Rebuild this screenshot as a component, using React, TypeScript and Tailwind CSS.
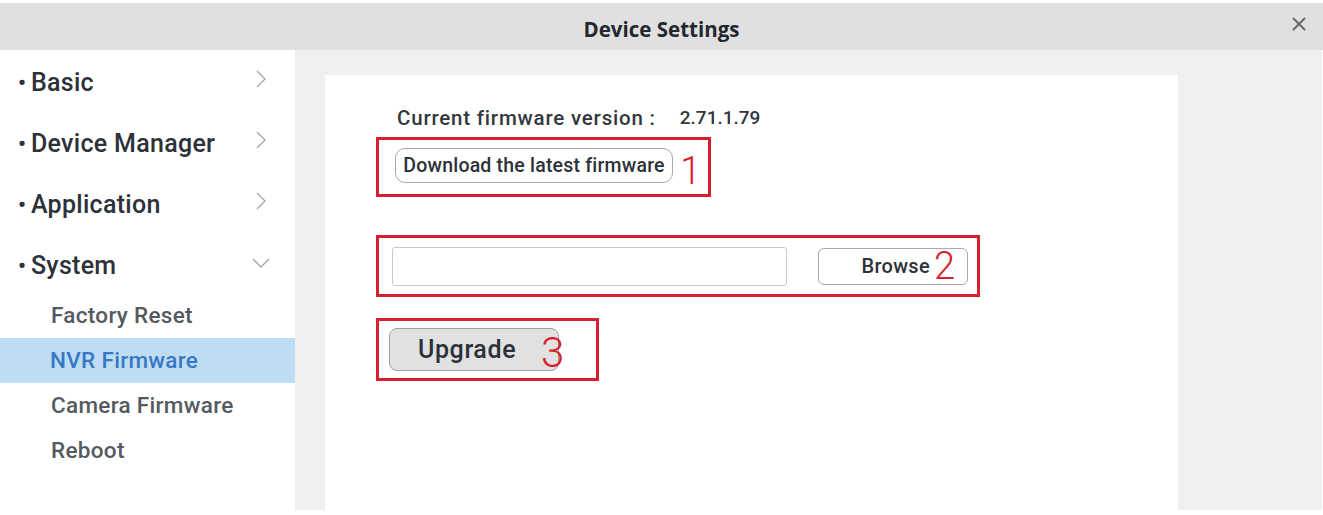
import { X } from 'lucide-react';

const mainItems = [
    { label: 'Basic', open: false },
    { label: 'Device Manager', open: false },
    { label: 'Application', open: false },
    { label: 'System', open: true },
];

const subItems = ['Factory Reset', 'NVR Firmware', 'Camera Firmware', 'Reboot'];

function Chevron({ open }: { open: boolean }) {
    if (open) {
        return (
            <svg width="20" height="20" viewBox="0 0 20 20" className="-mt-[6px]" fill="none" stroke="#a6a6a6" strokeWidth="1.3">
                <polyline points="2,6 10,14 18,6" />
            </svg>
        );
    }
    return (
        <svg width="20" height="20" viewBox="0 0 20 20" className="-mt-[8px]" fill="none" stroke="#a6a6a6" strokeWidth="1.3">
            <polyline points="6,2 14,10 6,18" />
        </svg>
    );
}

export default function App() {
    return (
        <div className="w-[1323px] h-[515px] overflow-hidden bg-white font-['Roboto',sans-serif] text-[#2d3139]">
            {/* Title bar */}
            <div className="mt-[3px] h-[47px] bg-[#e1e0e0] flex items-center justify-center relative">
                <span className="pt-[6px] font-['Open_Sans',sans-serif] font-bold text-[20.5px] text-[#23272e]">Device Settings</span>
                <X className="absolute right-[13px] top-[10px] h-[22px] w-[22px] text-[#666]" strokeWidth={2.2} />
            </div>

            <div className="flex">
                {/* Sidebar */}
                <div className="w-[295px] shrink-0 pt-[2px]">
                    {mainItems.map((item) => (
                        <div key={item.label} className="h-[61px] flex items-center pl-[18px] pr-[24px]">
                            <span className="text-[22px] leading-none mr-[5px] font-bold">•</span>
                            <span className="flex-1 text-[25px] font-medium tracking-[0.3px]">{item.label}</span>
                            <Chevron open={item.open} />
                        </div>
                    ))}
                    <div className="-mt-[3px]">
                        {subItems.map((s) => (
                            <div
                                key={s}
                                className={
                                    s === 'NVR Firmware'
                                        ? 'h-[45px] w-[297px] flex items-center pl-[50px] bg-[#c0dcf2] text-[#3579c6] text-[22.5px] font-medium tracking-[0.3px]'
                                        : 'h-[45px] flex items-center pl-[51px] text-[#555a60] text-[22.5px] font-medium tracking-[0.3px]'
                                }
                            >
                                {s}
                            </div>
                        ))}
                    </div>
                </div>

                {/* Main area */}
                <div className="w-[1027px] h-[460px] bg-[#efefef] pl-[30px] pt-[25px]">
                    <div className="w-[853px] h-[450px] bg-white pl-[51px] pt-[31px] flex flex-col items-start">
                        <div className="ml-[21px] h-[24px] flex items-center text-[20.5px] font-medium text-[#33373d]">
                            <span className="tracking-[0.8px]">Current firmware version :</span>
                            <span className="ml-[24px] text-[19px]">2.71.1.79</span>
                        </div>

                        {/* Step 1 */}
                        <div className="mt-[7px] w-[335px] h-[60px] border-[3px] border-[#d71f2e] flex items-start pl-[16px] pt-[8px]">
                            <button className="w-[278px] h-[35px] rounded-[10px] border border-[#a9a9a9] bg-white text-[19.5px] font-medium tracking-[0.2px] text-[#2d3139] whitespace-nowrap">
                                Download the latest firmware
                            </button>
                            <span className="ml-[7px] mt-[4px] text-[38px] leading-[38px] font-light text-[#d71f2e]">1</span>
                        </div>

                        {/* Step 2 */}
                        <div className="mt-[38px] w-[604px] h-[62px] border-[3px] border-[#d71f2e] flex items-center pl-[13px]">
                            <div className="w-[395px] h-[39px] border border-[#c9c9c9] rounded-[3px] bg-white" />
                            <button className="ml-[31px] w-[150px] h-[37px] rounded-[6px] border border-[#a9a9a9] bg-white flex items-center justify-end pr-[12px]">
                                <span className="text-[20px] font-medium text-[#2d3139] tracking-[0.3px]">Browse</span>
                                <span className="ml-[4px] text-[38px] leading-[30px] font-light text-[#d71f2e]">2</span>
                            </button>
                        </div>

                        {/* Step 3 */}
                        <div className="mt-[21px] w-[223px] h-[63px] border-[3px] border-[#d71f2e] flex items-center pl-[10px]">
                            <button className="w-[170px] h-[43px] rounded-[8px] border border-[#a0a0a0] bg-[#e1e1e1] text-left pl-[28px] text-[25px] font-medium tracking-[0.6px] text-[#2d3139]">
                                Upgrade
                            </button>
                            <span className="-ml-[18px] mt-[6px] text-[42px] leading-[42px] font-light text-[#d71f2e]">3</span>
                        </div>
                    </div>
                </div>
            </div>
        </div>
    );
}
